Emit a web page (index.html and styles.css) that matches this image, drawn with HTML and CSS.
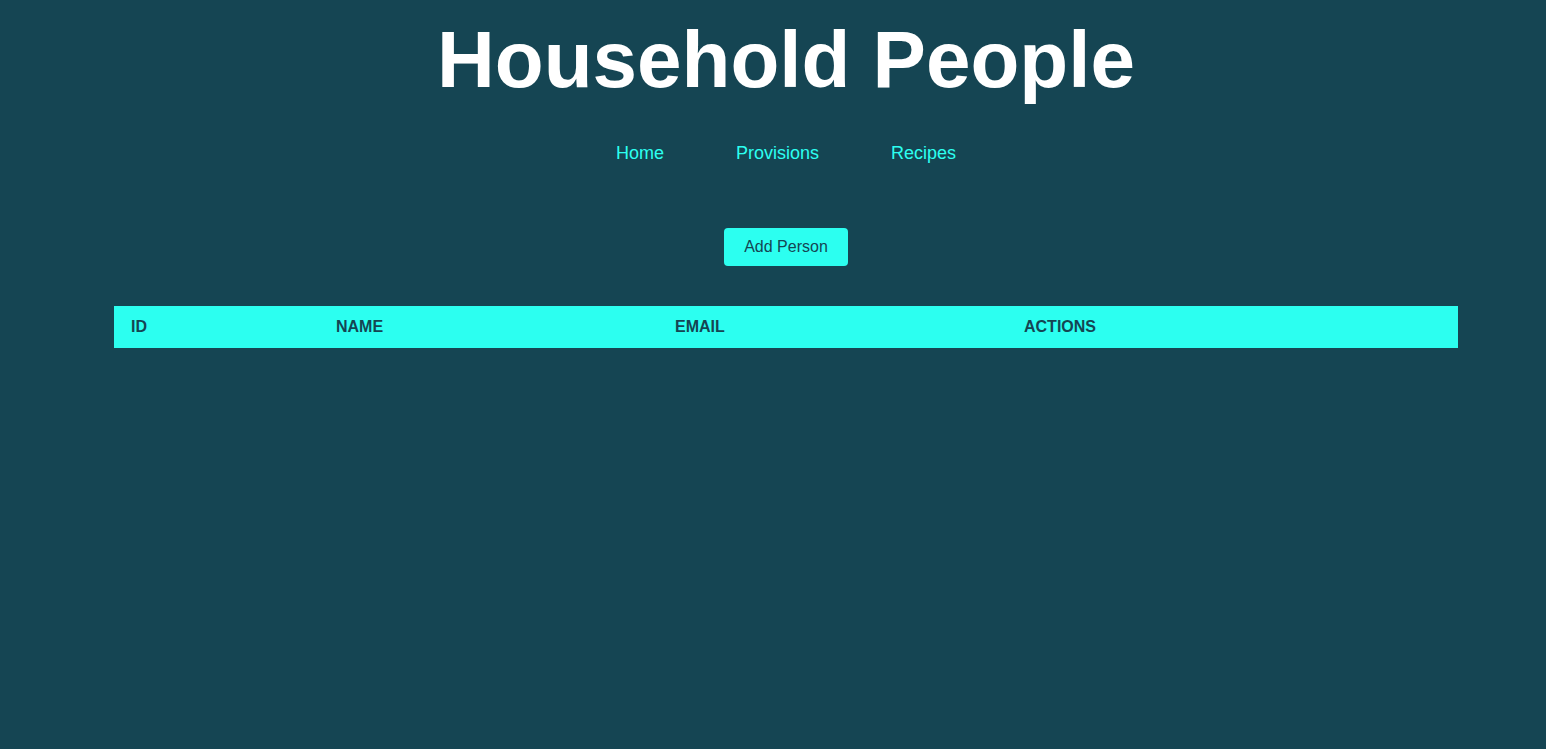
FILE: index.html
```html
<!DOCTYPE html>
<html>
<head>
<meta charset="utf-8">
<link rel="stylesheet" href="styles.css">
</head>
<body>
<div class="page">
  <h1 class="title">Household People</h1>
  <nav class="nav">
    <a href="#">Home</a>
    <a href="#">Provisions</a>
    <a href="#">Recipes</a>
  </nav>
  <div class="actions-bar">
    <button class="btn">Add Person</button>
  </div>
  <table class="people">
    <thead>
      <tr>
        <th class="c-id">ID</th>
        <th class="c-name">NAME</th>
        <th class="c-email">EMAIL</th>
        <th class="c-actions">ACTIONS</th>
      </tr>
    </thead>
    <tbody></tbody>
  </table>
</div>
</body>
</html>
```

FILE: styles.css
```css
html, body {
  margin: 0;
  padding: 0;
  background: #154553;
  height: 100%;
}
body {
  font-family: "Liberation Sans", Arial, sans-serif;
}
.page {
  padding-left: 26px;
  display: flex;
  flex-direction: column;
  align-items: center;
}
.title {
  margin: 14px 0 0 0;
  font-size: 80px;
  line-height: 92px;
  font-weight: bold;
  color: #ffffff;
}
.nav {
  display: flex;
  gap: 72px;
  margin-top: 36px;
}
.nav a {
  color: #2cfff0;
  text-decoration: none;
  font-size: 18px;
  line-height: 22px;
}
.actions-bar {
  margin-top: 64px;
}
.btn {
  background: #2cfff0;
  color: #154553;
  border: none;
  border-radius: 4px;
  width: 124px;
  height: 38px;
  font-family: "Liberation Sans", Arial, sans-serif;
  font-size: 16px;
  padding: 0;
}
.people {
  margin-top: 40px;
  width: 1344px;
  border-collapse: collapse;
  table-layout: fixed;
}
.people th {
  background: #2cfff0;
  color: #154553;
  text-align: left;
  font-size: 16px;
  font-weight: bold;
  height: 42px;
  padding: 0 17px;
}
.c-id { width: 171px; }
.c-name { width: 305px; }
.c-email { width: 315px; }
.c-actions { width: 417px; }
```
